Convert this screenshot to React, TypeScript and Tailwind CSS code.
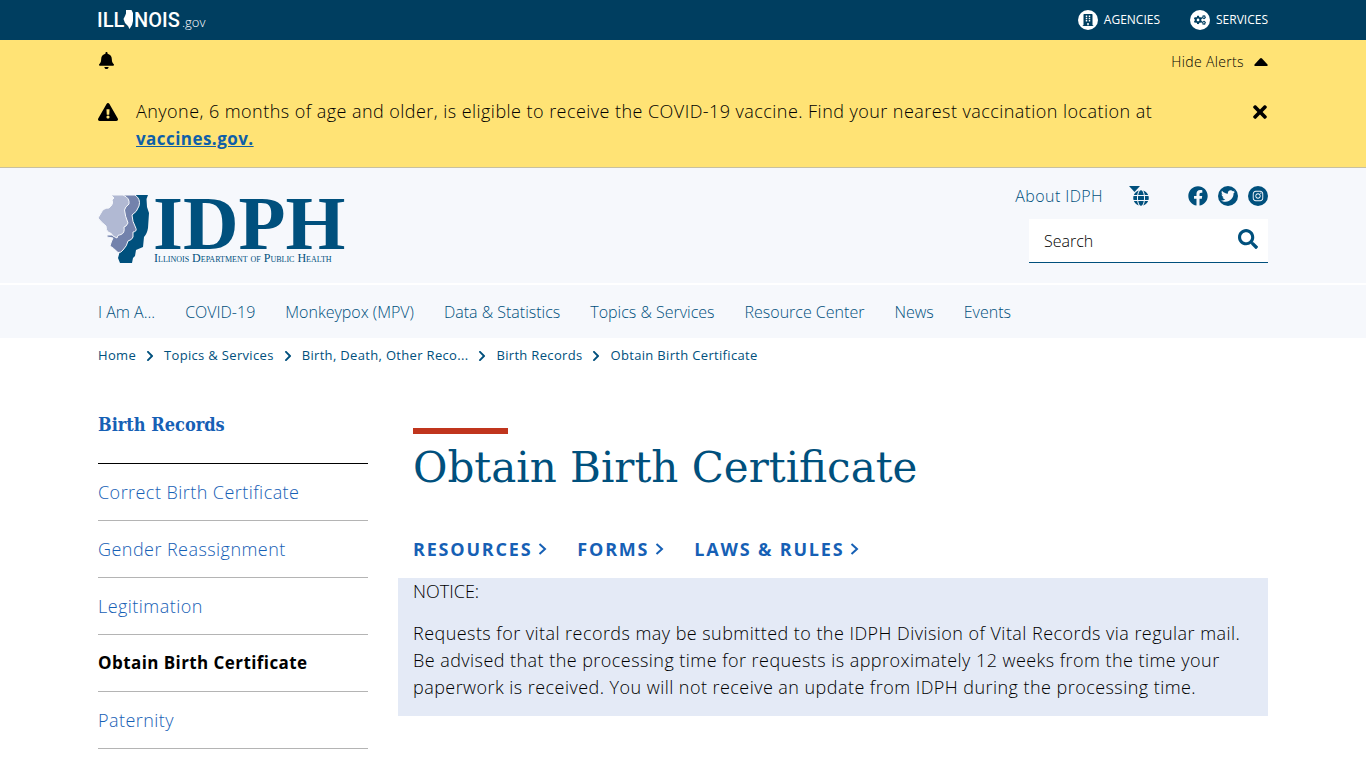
import React from "react";
import {
  FaBell,
  FaBuilding,
  FaChevronRight,
  FaCogs,
  FaExclamationTriangle,
  FaFacebook,
  FaGlobe,
  FaInstagram,
  FaSearch,
  FaTimes,
  FaTwitter,
} from "react-icons/fa";

const navItems = [
  "I Am A...",
  "COVID-19",
  "Monkeypox (MPV)",
  "Data & Statistics",
  "Topics & Services",
  "Resource Center",
  "News",
  "Events",
];

const crumbs = [
  "Home",
  "Topics & Services",
  "Birth, Death, Other Reco...",
  "Birth Records",
  "Obtain Birth Certificate",
];

const sideLinks = [
  "Correct Birth Certificate",
  "Gender Reassignment",
  "Legitimation",
  "Obtain Birth Certificate",
  "Paternity",
];

const sections = ["RESOURCES", "FORMS", "LAWS & RULES"];

const Container = ({ className = "", children }: { className?: string; children: React.ReactNode }) => (
  <div className={`mx-auto max-w-[1200px] px-[15px] ${className}`}>{children}</div>
);

const StateLogo = () => (
  <svg width="112" height="28" viewBox="0 0 112 28" fill="#fff" role="img" aria-label="Illinois.gov">
    <g fontFamily="Roboto, 'Liberation Sans', sans-serif" fontWeight="500" fontSize="20">
      <text x="-1" y="21">ILL</text>
      <text x="36" y="21">NOIS</text>
    </g>
    <path d="M28 4h5.500l1.500 3v8l-1 4-2.500 4-1.500-3-3-3-1.500-4 1.500-3 1-2.500z" />
    <text x="84" y="21" fontSize="13" fontWeight="300" fontFamily="'Open Sans', sans-serif">.gov</text>
  </svg>
);

const DepartmentLogo = () => (
  <svg
    width="250"
    height="72"
    viewBox="0 0 250 72"
    overflow="visible"
    role="img"
    aria-label="IDPH Illinois Department of Public Health"
  >
    <path
      d="M30 0h20l-1.500 4 .5 8 2 6-1 15q-1 6-4 9l-1 10-7 3-1 6-2 2-1 5H22l-2-5 2-7z"
      fill="#00507d"
    />
    <path
      d="M24 0h13q6 4 4 11-2 6-7 9 0 6 4 13.500 1 3-3 3.500v5q-1 3-5 4-1 5-5 9-2 3-5 2.500-5-5-8-6.500 1-4 3-8l-6-1v-2h5z"
      fill="#7382ac"
      stroke="#f6f8fc"
      strokeWidth="1"
    />
    <path
      d="M13 0h12q7 3 6 9-4 3-4.500 6 .5 6 3.500 13-2 4-4 4 1 6-3 7.500-4 0-4 3.500l-4-2q-1-3-5-4-2-2-2-6-5-4-8-8l3-5q2-5 8-5 5-4 3-8l2-2z"
      fill="#b1b9d3"
      stroke="#f6f8fc"
      strokeWidth="1"
    />
    <g fill="#00507d" fontFamily="'Liberation Serif', serif">
      <text x="55" y="54" fontSize="77" fontWeight="700">IDPH</text>
      <text x="56" y="67" fontSize="12" style={{ fontVariant: "small-caps" }}>
        Illinois Department of Public Health
      </text>
    </g>
  </svg>
);

const TopBar = () => (
  <div className="bg-[#003e60] text-white">
    <Container className="flex h-10 items-center justify-between">
      <a href="#">
        <StateLogo />
      </a>
      <div className="flex gap-[30px] text-xs">
        <a href="#" className="flex items-center gap-1.5">
          <span className="flex size-5 items-center justify-center rounded-full bg-white text-[#003e60]">
            <FaBuilding className="size-3" />
          </span>
          AGENCIES
        </a>
        <a href="#" className="flex items-center gap-1.5">
          <span className="flex size-5 items-center justify-center rounded-full bg-white text-[#003e60]">
            <FaCogs className="size-3" />
          </span>
          SERVICES
        </a>
      </div>
    </Container>
  </div>
);

const Alerts = () => (
  <section className="border-b border-[#c8c0a0] bg-[#ffe375] text-black">
    <Container className="pt-3 pb-[15px]">
      <div className="flex items-start justify-between">
        <FaBell className="size-[17px]" />
        <button className="flex items-center gap-2.5 text-[14px] leading-5 font-light tracking-wide">
          Hide Alerts
          <svg width="14" height="8" viewBox="0 0 14 8">
            <path d="M6 .5q1-1 2 0l5.500 6q.5 1.500-1 1.500h-11q-1.500 0-1-1.500z" />
          </svg>
        </button>
      </div>
      <div className="mt-[26px] flex items-start">
        <FaExclamationTriangle className="mt-1 size-5 shrink-0" />
        <p className="ml-[18px] flex-1 pr-20 text-[18px] leading-[27px] font-light tracking-wide">
          Anyone, 6 months of age and older, is eligible to receive the COVID-19 vaccine. Find your nearest
          vaccination location at{" "}
          <a href="#" className="text-[17px] font-bold text-[#0f5fa8] underline">
            vaccines.gov.
          </a>
        </p>
        <button aria-label="Close alert" className="-mr-0.5 mt-1">
          <FaTimes className="size-5" />
        </button>
      </div>
    </Container>
  </section>
);

const Header = () => (
  <header className="bg-[#f6f8fc] text-[#00507d]">
    <Container className="flex items-start justify-between">
      <a href="#" className="mt-[27px] mb-4">
        <DepartmentLogo />
      </a>
      <div className="flex flex-col items-end pt-4">
        <div className="flex items-center">
          <a href="#" className="text-[16px] leading-6 font-light tracking-wide">
            About IDPH
          </a>
          <button aria-label="Select language" className="relative ml-[26px] h-5 w-5">
            <svg width="11" height="6" viewBox="0 0 11 6" fill="currentColor" className="absolute top-0 left-0">
              <path d="M0 0h11L5.500 6z" />
            </svg>
            <FaGlobe className="absolute right-0 bottom-0 size-4" />
          </button>
          <div className="ml-[39px] flex gap-2.5">
            <a href="#" aria-label="Facebook">
              <FaFacebook className="size-5" />
            </a>
            <a href="#" aria-label="Twitter" className="flex size-5 items-center justify-center rounded-full bg-[#00507d] text-[#f6f8fc]">
              <FaTwitter className="size-3.5" />
            </a>
            <a href="#" aria-label="Instagram" className="flex size-5 items-center justify-center rounded-full bg-[#00507d] text-[#f6f8fc]">
              <FaInstagram className="size-3" />
            </a>
          </div>
        </div>
        <form className="mt-[11px] flex h-11 w-[239px] items-center border-b border-[#00507d] bg-white">
          <input
            type="text"
            aria-label="Search"
            placeholder="Search"
            className="h-full min-w-0 flex-1 pl-[15px] text-[16px] font-light text-black outline-none placeholder:text-black"
          />
          <button type="button" aria-label="Submit search" className="mr-2.5 mb-1">
            <FaSearch className="size-5" />
          </button>
        </form>
      </div>
    </Container>
    <nav className="border-t-2 border-white">
      <Container className="flex h-[53px] items-center gap-[30px] text-[16px] font-light">
        {navItems.map((item) => (
          <a key={item} href="#">
            {item}
          </a>
        ))}
      </Container>
    </nav>
  </header>
);

const Breadcrumbs = () => (
  <Container>
    <ol className="flex h-9 items-center text-[13px] tracking-wide text-[#00507d]">
      {crumbs.map((crumb, index) => (
        <li key={crumb} className="flex items-center">
          {index > 0 && <FaChevronRight className="mx-2 size-3" />}
          <a href="#">{crumb}</a>
        </li>
      ))}
    </ol>
  </Container>
);

const Sidebar = () => (
  <aside className="w-[270px] shrink-0 text-[#1660b5]">
    <h2 className="border-b border-black pt-[37px] pb-6 font-['DejaVu_Serif_Condensed','DejaVu_Serif',serif] text-[18px] leading-7 font-bold">
      Birth Records
    </h2>
    <ul>
      {sideLinks.map((link) => (
        <li key={link} className="border-b border-[#b4b4b4]">
          <a
            href="#"
            className={
              link === "Obtain Birth Certificate"
                ? "block py-4 text-[17px] leading-6 font-bold tracking-wide text-black"
                : "block py-4 text-[18px] leading-6 font-light tracking-wide"
            }
          >
            {link}
          </a>
        </li>
      ))}
    </ul>
  </aside>
);

const Content = () => (
  <main className="min-w-0 flex-1 pt-[54px]">
    <div className="px-[15px]">
      <div className="h-1.5 w-[95px] bg-[#c0351d]" />
      <h1 className="mt-1 font-['DejaVu_Serif',serif] text-[42px] leading-[60px] text-[#00507d]">
        Obtain Birth Certificate
      </h1>
      <div className="mt-[39px] mb-[17px] flex gap-[30px] text-[18px] leading-6 font-bold tracking-widest text-[#1660b5]">
        {sections.map((section) => (
          <a key={section} href="#" className="flex items-center gap-1.5">
            {section}
            <svg width="9" height="12" viewBox="0 0 9 12" fill="none" stroke="currentColor" strokeWidth="2">
              <path d="M1.500 1 7 6l-5.500 5" />
            </svg>
          </a>
        ))}
      </div>
    </div>
    <div className="bg-[#e4eaf6] px-[15px] pb-[15px] text-[18px] leading-[27px] font-light text-black">
      <p>NOTICE:</p>
      <p className="mt-[15px] tracking-wide">
        Requests for vital records may be submitted to the IDPH Division of Vital Records via regular mail. Be
        advised that the processing time for requests is approximately 12 weeks from the time your paperwork is
        received. You will not receive an update from IDPH during the processing time.
      </p>
    </div>
  </main>
);

const App = () => (
  <div className="min-h-screen bg-white font-['Open_Sans','Noto_Sans',sans-serif]">
    <TopBar />
    <Alerts />
    <Header />
    <Breadcrumbs />
    <Container className="flex gap-[30px]">
      <Sidebar />
      <Content />
    </Container>
  </div>
);

export default App;
